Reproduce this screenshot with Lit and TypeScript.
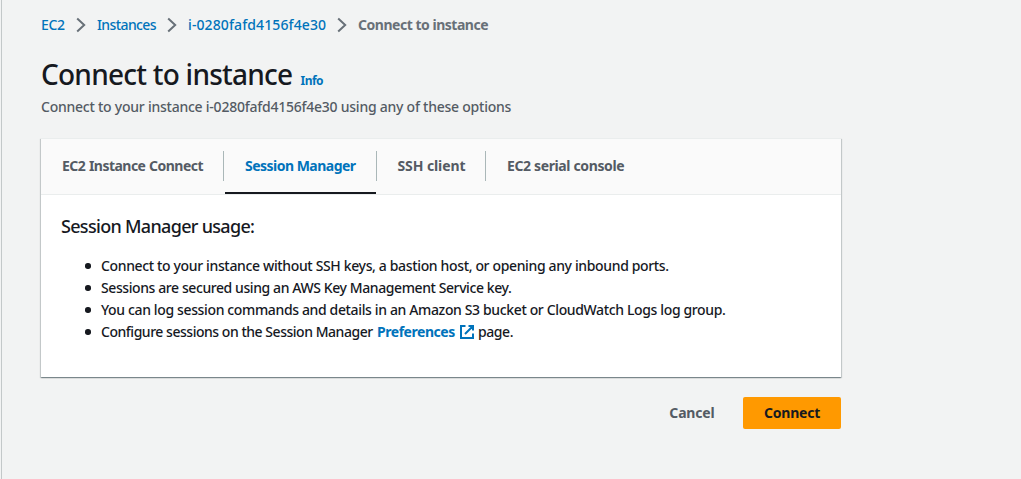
import { LitElement, html, css, svg } from "lit";
import { customElement, property } from "lit/decorators.js";

const chevron = html`<svg class="chevron" width="10" height="16" viewBox="0 0 10 16">
  ${svg`<path d="M1.2 1.4 L8.2 8 L1.2 14.6" fill="none" stroke="#687078" stroke-width="2"/>`}
</svg>`;

const externalIcon = html`<svg class="external" width="14" height="14" viewBox="0 0 14 14">
  ${svg`<path d="M5.5 1H1V13H13V8.5M8.5 1H13V5.5M13 1L5 9" fill="none" stroke="#0073bb" stroke-width="2"/>`}
</svg>`;

@customElement("connect-tabs")
export class ConnectTabs extends LitElement {
  @property({ type: Number }) active = 1;

  static styles = css`
    :host {
      display: flex;
      height: 55px;
      background: #fafafa;
      border-bottom: 1px solid #eaeded;
      color: #545b64;
    }
    .tab {
      display: flex;
      flex-direction: column;
      box-sizing: border-box;
      height: 55px;
    }
    .label {
      display: flex;
      box-sizing: border-box;
      height: 30px;
      margin-top: 12px;
      padding-top: 4px;
      padding-left: 21px;
      border-right: 1px solid #aab7b8;
      font-weight: 700;
      line-height: 22px;
      white-space: nowrap;
    }
    .tab:last-child .label {
      border-right: none;
    }
    .bar {
      height: 2px;
      margin-top: 11px;
      margin-left: 1px;
      margin-right: 1px;
      background: #16191f;
    }
    .active {
      color: #0073bb;
    }
    .ec2 .label { width: 183px; letter-spacing: -0.52px; word-spacing: 0.5px; }
    .session .label { width: 153px; letter-spacing: -0.52px; }
    .ssh .label { width: 109px; padding-left: 20.5px; letter-spacing: -0.1px; }
    .serial .label { width: 150px; letter-spacing: -0.37px; }
  `;

  render() {
    const tabs = [
      ["ec2", "EC2 Instance Connect"],
      ["session", "Session Manager"],
      ["ssh", "SSH client"],
      ["serial", "EC2 serial console"],
    ];
    return tabs.map(
      ([kind, label], i) => html`<div class="tab ${kind} ${i === this.active ? "active" : ""}">
        <div class="label">${label}</div>
        ${i === this.active ? html`<div class="bar"></div>` : ""}
      </div>`
    );
  }
}

@customElement("app-root")
export class AppRoot extends LitElement {
  static styles = css`
    :host {
      display: block;
      box-sizing: border-box;
      height: 479px;
      padding-left: 1px;
      background: #f2f3f3;
      color: #16191f;
      font: 500 14px/22px "Noto Sans", sans-serif;
    }
    .page {
      box-sizing: border-box;
      height: 479px;
      padding: 14px 0 0 39px;
      border-left: 1px solid #c3c8c9;
    }
    .crumbs {
      display: flex;
      height: 22px;
      align-items: center;
      color: #0073bb;
      white-space: nowrap;
    }
    .chevron { flex: none; margin: 0 11px; }
    .c1 { width: 24px; letter-spacing: -0.3px; }
    .c2 { width: 59px; letter-spacing: -0.6px; }
    .c3 { width: 138px; letter-spacing: 0.11px; }
    .c4 { color: #687078; font-weight: 700; letter-spacing: -0.48px; }
    .title {
      display: flex;
      align-items: baseline;
      height: 36px;
      margin-top: 20px;
      white-space: nowrap;
    }
    h1 {
      width: 259.5px;
      margin: 0;
      font-size: 28px;
      font-weight: 500;
      line-height: 36px;
      letter-spacing: -0.76px;
    }
    .info {
      color: #0073bb;
      font-size: 12px;
      font-weight: 700;
      letter-spacing: -0.5px;
    }
    .sub {
      margin-top: 4px;
      color: #545b64;
      letter-spacing: -0.24px;
      white-space: nowrap;
    }
    .card {
      box-sizing: border-box;
      width: 800px;
      height: 239px;
      margin-top: 20px;
      border-top: 1px solid #eaeded;
      background: #fff;
      box-shadow: 0 1px 1px 0 rgba(0, 28, 36, 0.3), 1px 1px 1px 0 rgba(0, 28, 36, 0.15),
        -1px 1px 1px 0 rgba(0, 28, 36, 0.15);
    }
    h2 {
      margin: 20px 0 0 20px;
      font-size: 18px;
      font-weight: 500;
      line-height: 22px;
      letter-spacing: -0.69px;
    }
    ul {
      margin: 18px 0 0;
      padding-left: 60px;
      list-style: none;
      white-space: nowrap;
    }
    li { display: flex; height: 22px; align-items: center; }
    li::before {
      content: "";
      flex: none;
      width: 5.5px;
      height: 5.5px;
      margin-left: -16px;
      margin-right: 10.5px;
      border-radius: 50%;
      background: #16191f;
    }
    .l1 { letter-spacing: -0.355px; }
    .l2 { letter-spacing: -0.41px; }
    .l3 { letter-spacing: -0.363px; }
    .l4 { width: 276px; letter-spacing: -0.47px; }
    .pref { width: 83px; color: #0073bb; font-weight: 700; letter-spacing: -0.46px; }
    .external { flex: none; margin-right: 4px; }
    .l5 { letter-spacing: -0.42px; }
    .actions {
      display: flex;
      box-sizing: border-box;
      width: 800px;
      margin-top: 20px;
      justify-content: flex-end;
      align-items: center;
      gap: 28.5px;
      font-weight: 700;
    }
    .cancel { color: #545b64; letter-spacing: -0.18px; }
    .connect {
      box-sizing: border-box;
      width: 98px;
      height: 32px;
      padding: 5px 0;
      border-radius: 2px;
      background: #ff9900;
      text-align: center;
      letter-spacing: -0.2px;
    }
  `;

  render() {
    return html`<div class="page">
      <nav class="crumbs">
        <span class="c1">EC2</span>${chevron}<span class="c2">Instances</span>${chevron}<span class="c3"
          >i-0280fafd4156f4e30</span
        >${chevron}<span class="c4">Connect to instance</span>
      </nav>
      <div class="title">
        <h1>Connect to instance</h1>
        <span class="info">Info</span>
      </div>
      <div class="sub">Connect to your instance i-0280fafd4156f4e30 using any of these options</div>
      <section class="card">
        <connect-tabs></connect-tabs>
        <h2>Session Manager usage:</h2>
        <ul>
          <li><span class="l1">Connect to your instance without SSH keys, a bastion host, or opening any inbound ports.</span></li>
          <li><span class="l2">Sessions are secured using an AWS Key Management Service key.</span></li>
          <li><span class="l3">You can log session commands and details in an Amazon S3 bucket or CloudWatch Logs log group.</span></li>
          <li><span class="l4">Configure sessions on the Session Manager</span><span class="pref">Preferences</span>${externalIcon}<span class="l5">page.</span></li>
        </ul>
      </section>
      <div class="actions">
        <span class="cancel">Cancel</span>
        <div class="connect">Connect</div>
      </div>
    </div>`;
  }
}
